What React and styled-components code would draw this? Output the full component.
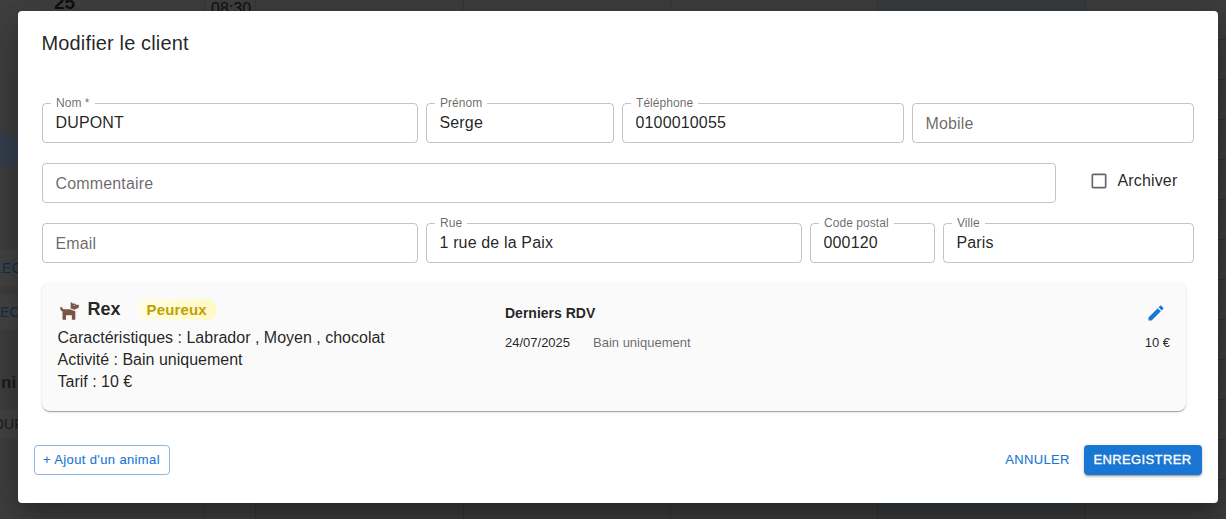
import React from "react";
import styled, { createGlobalStyle } from "styled-components";
import { FaDog } from "react-icons/fa";

const GlobalStyle = createGlobalStyle`
  *, *::before, *::after { box-sizing: border-box; }
  body {
    margin: 0;
    background: #3f3f3f;
    color: rgba(0, 0, 0, 0.87);
    font-family: "Liberation Sans", Arial, Helvetica, sans-serif;
    font-size: 16px;
    line-height: 1.5;
    letter-spacing: 0.00938em;
  }
  button, input { font-family: inherit; }
`;

const Screen = styled.div`
  position: relative;
  width: 1226px;
  height: 519px;
  overflow: hidden;
`;

/* ---- Planning behind the dialog ---- */

const Planning = styled.div`
  display: flex;
  height: 519px;
  background: #3f3f3f;
  color: #101010;
`;

const Sidebar = styled.aside`
  width: 204px;
  flex: none;
  display: flex;
  flex-direction: column;
`;

const DayNumber = styled.div`
  height: 130px;
  padding-left: 54px;
  font-size: 19px;
  font-weight: 700;
  line-height: 22px;
  margin-top: -8px;
  letter-spacing: 0;
`;

const Bubbles = styled.div`
  display: flex;
  height: 40px;
  margin: 8px 0 0 -24px;
`;

const Bubble = styled.span`
  width: 34px;
  height: 40px;
  border-radius: 12px;
  background: #35414e;
`;

const SideItem = styled.div`
  height: ${(p) => p.$height}px;
  margin-top: ${(p) => p.$gap}px;
  text-indent: ${(p) => p.$indent || 0}px;
  line-height: ${(p) => p.$height + 1}px;
  font-size: ${(p) => p.$size || 13}px;
  font-weight: ${(p) => (p.$bold ? 700 : 400)};
  color: ${(p) => p.$color};
  background: ${(p) => p.$fill || "transparent"};
  white-space: nowrap;
`;

const TimeColumn = styled.div`
  width: 52px;
  flex: none;
  border-left: 1px solid #363636;
  border-right: 1px solid #363636;
  padding-left: 6px;
  font-size: 16px;
  line-height: 17px;
  letter-spacing: 0;
`;

const DayColumn = styled.div`
  width: ${(p) => p.$width}px;
  flex: none;
  border-right: 1px solid #343434;
  background:
    repeating-linear-gradient(transparent 0 39px, rgba(0, 0, 0, 0.16) 39px 40px),
    repeating-linear-gradient(transparent 0 19px, rgba(0, 0, 0, 0.05) 19px 20px),
    ${(p) => (p.$today ? "#393c3f" : "#3d3d3d")};
`;

/* ---- Dialog ---- */

const Dialog = styled.section`
  position: absolute;
  left: 18px;
  top: 11px;
  width: 1200px;
  height: 492px;
  border-radius: 4px;
  background: #fff;
  display: flex;
  flex-direction: column;
  box-shadow:
    0 11px 15px -7px rgba(0, 0, 0, 0.2),
    0 24px 38px 3px rgba(0, 0, 0, 0.14),
    0 9px 46px 8px rgba(0, 0, 0, 0.12);
`;

const DialogTitle = styled.h2`
  margin: 0;
  padding: 16px 23.5px;
  height: 64px;
  font-size: 20px;
  font-weight: 400;
  line-height: 32px;
  letter-spacing: 0.0075em;
`;

const DialogContent = styled.div`
  padding: 28px 24px 0;
  flex: 1;
`;

const FormRow = styled.div`
  display: grid;
  grid-template-columns: ${(p) => p.$columns};
  column-gap: 8px;
  height: 40px;
  margin-bottom: 20px;
`;

const FieldRoot = styled.div`
  position: relative;
  height: 40px;
`;

const FieldInput = styled.input`
  width: 100%;
  height: 40px;
  border: 0;
  outline: 0;
  background: none;
  padding: 8px 13.5px 9px;
  font-size: 16px;
  line-height: 23px;
  color: rgba(0, 0, 0, 0.87);
  letter-spacing: 0.00938em;
`;

const FieldLabel = styled.label`
  position: absolute;
  left: ${(p) => (p.$shrink ? 14 : 13.5)}px;
  top: ${(p) => (p.$shrink ? "-8px" : "9px")};
  font-size: ${(p) => (p.$shrink ? 12 : 16)}px;
  line-height: ${(p) => (p.$shrink ? 17 : 23)}px;
  color: rgba(0, 0, 0, 0.6);
  letter-spacing: ${(p) => (p.$shrink ? 0.05 : 0.15)}px;
  pointer-events: none;
`;

const Outline = styled.fieldset`
  position: absolute;
  inset: -5px 0 0;
  margin: 0;
  padding: 0 8px;
  border: 1px solid rgba(0, 0, 0, 0.23);
  border-radius: 4px;
  pointer-events: none;
  min-width: 0;
`;

const Notch = styled.legend`
  height: 11px;
  padding: 0;
  font-size: 12px;
  letter-spacing: 0.05px;
  visibility: hidden;
  white-space: nowrap;

  span { padding: 0 5px; }
`;

const OutlineTop = styled(Outline)`
  inset: 0;
`;

const CheckLabel = styled.label`
  display: flex;
  align-items: center;
  gap: 8.5px;
  height: 36px;
  padding-left: 25px;
`;

const PetCard = styled.article`
  display: flex;
  width: 1144px;
  height: 129px;
  margin-top: -1px;
  padding: 16px;
  border-radius: 8px;
  background: #fafafa;
  box-shadow:
    0 2px 1px -1px rgba(0, 0, 0, 0.2),
    0 1px 1px 0 rgba(0, 0, 0, 0.14),
    0 1px 3px 0 rgba(0, 0, 0, 0.12);
`;

const PetInfo = styled.div`
  width: 447px;
  flex: none;
`;

const PetHeader = styled.div`
  display: flex;
  align-items: center;
  height: 22px;
  margin-bottom: 7px;

  svg { margin: 2px 7.5px 0 1px; }
`;

const PetName = styled.strong`
  font-size: 18px;
  line-height: 22px;
  letter-spacing: 0;
`;

const Chip = styled.span`
  height: 21px;
  margin-left: 16px;
  padding: 0 10px;
  border-radius: 11px;
  background: linear-gradient(90deg, #fffde7, #fff9c4);
  color: #bfa100;
  font-size: 15px;
  font-weight: 700;
  line-height: 22px;
  letter-spacing: 0.15px;
`;

const PetLine = styled.div`
  height: 22px;
  margin-left: -0.5px;
  line-height: 22px;
  letter-spacing: 0;
`;

const History = styled.div`
  flex: 1;
  padding-top: 4px;
`;

const HistoryHeader = styled.div`
  display: flex;
  align-items: center;
  justify-content: space-between;
  height: 22px;
  font-size: 14px;
  font-weight: 700;
  letter-spacing: 0;

  svg { margin-right: 4px; }
`;

const HistoryRow = styled.div`
  display: flex;
  height: 20px;
  margin-top: 9px;
  font-size: 13px;
  line-height: 20px;
  letter-spacing: 0;
`;

const HistoryDate = styled.span`
  width: 88px;
`;

const HistoryService = styled.span`
  flex: 1;
  color: rgba(0, 0, 0, 0.6);
`;

const Actions = styled.footer`
  display: flex;
  align-items: center;
  gap: 8px;
  padding: 0 16px 28px;
`;

const Spacer = styled.div`
  flex: 1;
`;

const Button = styled.button`
  height: 30px;
  padding: 0 1px 2px 0;
  border: ${(p) => (p.$variant === "outlined" ? "1px solid rgba(25, 118, 210, 0.5)" : "0")};
  border-radius: 4px;
  background: ${(p) => (p.$variant === "contained" ? "#1976d2" : "transparent")};
  color: ${(p) => (p.$variant === "contained" ? "#fff" : "#1976d2")};
  box-shadow: ${(p) =>
    p.$variant === "contained"
      ? "0 3px 1px -2px rgba(0,0,0,.2), 0 2px 2px 0 rgba(0,0,0,.14), 0 1px 5px 0 rgba(0,0,0,.12)"
      : "none"};
  width: ${(p) => p.$width}px;
  font-size: 13px;
  font-weight: 500;
  line-height: 23px;
  letter-spacing: 0.02857em;
  white-space: nowrap;
  -webkit-text-stroke: ${(p) => (p.$variant === "contained" ? 0.35 : 0.1)}px currentColor;
`;

function Field({ label, value }) {
  const filled = Boolean(value);
  return (
    <FieldRoot>
      <FieldLabel $shrink={filled}>{label}</FieldLabel>
      <FieldInput defaultValue={value} aria-label={label} />
      {filled ? (
        <Outline aria-hidden="true">
          <Notch><span>{label}</span></Notch>
        </Outline>
      ) : (
        <OutlineTop aria-hidden="true" />
      )}
    </FieldRoot>
  );
}

const CheckboxIcon = () => (
  <svg width="20" height="20" viewBox="0 0 24 24" fill="rgba(0,0,0,0.6)">
    <path d="M19 5v14H5V5h14m0-2H5c-1.1 0-2 .9-2 2v14c0 1.1.9 2 2 2h14c1.100 0 2-.9 2-2V5c0-1.100-.9-2-2-2z" />
  </svg>
);

const EditIcon = () => (
  <svg width="20" height="20" viewBox="0 0 24 24" fill="#1976d2">
    <path d="M3 17.250V21h3.750L17.810 9.940l-3.750-3.750L3 17.250zM20.710 7.040c.39-.39.39-1.020 0-1.410l-2.340-2.340c-.39-.39-1.020-.39-1.410 0l-1.830 1.830 3.750 3.750 1.830-1.830z" />
  </svg>
);

export default function App() {
  return (
    <>
      <GlobalStyle />
      <Screen>
        <Planning aria-hidden="true">
          <Sidebar>
            <DayNumber>25</DayNumber>
            <Bubbles><Bubble /><Bubble /></Bubbles>
            <SideItem $height={36} $gap={80} $size={14} $indent={-6} $color="#12304f" $fill="#444">LEC</SideItem>
            <SideItem $height={36} $gap={8} $size={14} $color="#12304f" $fill="#444">EC</SideItem>
            <SideItem $height={30} $gap={37} $size={17} $indent={1} $bold $color="#1c1c1c">ni</SideItem>
            <SideItem $height={28} $gap={13} $size={14} $indent={-7} $color="#1c1c1c" $fill="#444">OUR</SideItem>
          </Sidebar>
          <TimeColumn>08:30</TimeColumn>
          <DayColumn $width={208} />
          <DayColumn $width={207} />
          <DayColumn $width={207} />
          <DayColumn $width={208} $today />
          <DayColumn $width={207} />
        </Planning>

        <Dialog role="dialog">
          <DialogTitle>Modifier le client</DialogTitle>
          <DialogContent>
            <FormRow $columns="376px 188px 282px 282px">
              <Field label="Nom *" value="DUPONT" />
              <Field label="Prénom" value="Serge" />
              <Field label="Téléphone" value="0100010055" />
              <Field label="Mobile" />
            </FormRow>
            <FormRow $columns="1014px 1fr">
              <Field label="Commentaire" />
              <CheckLabel><CheckboxIcon />Archiver</CheckLabel>
            </FormRow>
            <FormRow $columns="376px 376px 125px 251px">
              <Field label="Email" />
              <Field label="Rue" value="1 rue de la Paix" />
              <Field label="Code postal" value="000120" />
              <Field label="Ville" value="Paris" />
            </FormRow>

            <PetCard>
              <PetInfo>
                <PetHeader>
                  <FaDog size={21} color="#795548" />
                  <PetName>Rex</PetName>
                  <Chip>Peureux</Chip>
                </PetHeader>
                <PetLine>Caractéristiques : Labrador , Moyen , chocolat</PetLine>
                <PetLine>Activité : Bain uniquement</PetLine>
                <PetLine>Tarif : 10 €</PetLine>
              </PetInfo>
              <History>
                <HistoryHeader>Derniers RDV<EditIcon /></HistoryHeader>
                <HistoryRow>
                  <HistoryDate>24/07/2025</HistoryDate>
                  <HistoryService>Bain uniquement</HistoryService>
                  <span>10 €</span>
                </HistoryRow>
              </History>
            </PetCard>
          </DialogContent>
          <Actions>
            <Button $variant="outlined" $width={136}>+ Ajout d'un animal</Button>
            <Spacer />
            <Button $variant="text" $width={76}>ANNULER</Button>
            <Button $variant="contained" $width={118}>ENREGISTRER</Button>
          </Actions>
        </Dialog>
      </Screen>
    </>
  );
}
